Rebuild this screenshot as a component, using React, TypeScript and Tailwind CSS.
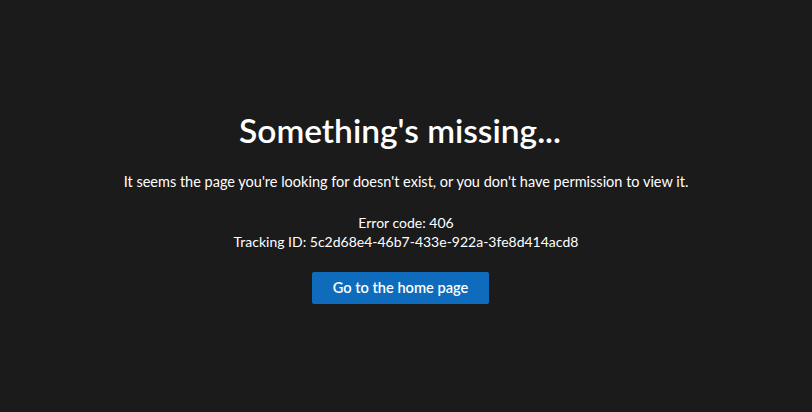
export default function App() {
  return (
    <div
      className="flex h-[412px] w-full flex-col items-center bg-[#1b1b1b] text-white"
      style={{ fontFamily: '"Segoe UI", Lato, "Noto Sans", sans-serif' }}
    >
      <h1 className="mr-[12px] mt-[110px] text-[33.5px] font-semibold leading-[40px]">Something's missing...</h1>
      <p className="mt-[22px] text-[14.5px] leading-[20px]">
        It seems the page you're looking for doesn't exist, or you don't have permission to view it.
      </p>
      <div className="mt-[21px] flex flex-col items-center text-[14px] leading-[19px]">
        <span>Error code: 406</span>
        <span>Tracking ID: 5c2d68e4-46b7-433e-922a-3fe8d414acd8</span>
      </div>
      <button className="mr-[11px] mt-[21px] h-[32px] w-[177px] rounded-[2px] bg-[#0f6cbd] text-[14.6px] font-semibold">
        Go to the home page
      </button>
    </div>
  );
}
